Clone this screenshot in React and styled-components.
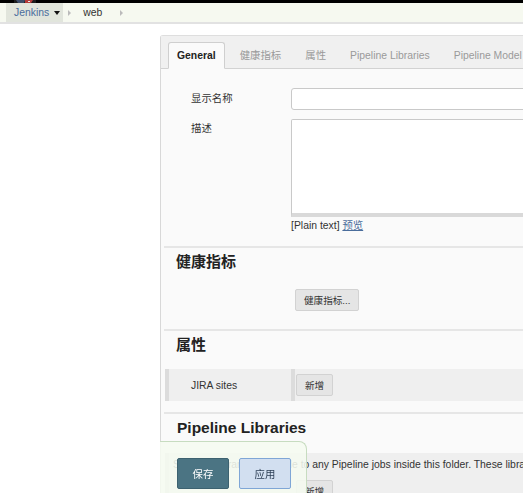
import React from "react";
import styled, { createGlobalStyle } from "styled-components";

const GlobalStyle = createGlobalStyle`
  html, body {
    margin: 0;
    padding: 0;
    background: #fff;
    overflow: hidden;
  }
  body {
    width: 523px;
    height: 493px;
    font-family: "Liberation Sans", "Noto Sans CJK SC", sans-serif;
    font-size: 10.4px;
    color: #333;
  }
  * { box-sizing: border-box; }
`;

const TopStrip = styled.div`
  height: 3px;
  background: #000;
  padding-left: 14px;
  display: flex;
  overflow: hidden;
`;

const Breadcrumbs = styled.div`
  height: 21px;
  background: #f6f9f0;
  border-bottom: 2px solid #e2e2e2;
  display: flex;
  align-items: stretch;
  padding-left: 6px;
`;

const Crumb = styled.div`
  display: flex;
  align-items: center;
  gap: 4px;
  padding: 0 ${(p) => (p.$active ? "3px" : "0")} 0 ${(p) => (p.$active ? "8px" : "0")};
  background: ${(p) => (p.$active ? "#e1e5dc" : "transparent")};
  color: ${(p) => (p.$active ? "#4a6d9c" : "#333")};
`;

const Caret = styled.span`
  width: 0;
  height: 0;
  border-left: 3.5px solid transparent;
  border-right: 3.5px solid transparent;
  border-top: 4px solid #111;
  margin-left: 1px;
`;

const Chevron = styled.span`
  display: flex;
  align-items: center;
  margin: 0 ${(p) => p.$right || 12}px 0 ${(p) => p.$left || 5}px;
  &::before {
    content: "";
    width: 0;
    height: 0;
    border-top: 3px solid transparent;
    border-bottom: 3px solid transparent;
    border-left: 3.5px solid #bbb;
  }
`;

const Main = styled.div`
  padding: 11px 0 0 160px;
`;

const Panel = styled.div`
  width: 480px;
  height: 470px;
  background: #fafafa;
  border-left: 1px solid #d8d8d8;
  border-top: 1px solid #dedede;
  border-top-left-radius: 3px;
`;

const TabBar = styled.div`
  display: flex;
  gap: 6px;
  padding: 6px 0 0 7px;
  background: #f0f0f0;
  border-bottom: 1px solid #d2d2d2;
  height: 33px;
`;

const Tab = styled.div`
  height: 27px;
  line-height: 25px;
  padding: 0 8px;
  white-space: nowrap;
  border: 1px solid ${(p) => (p.$active ? "#cfcfcf" : "transparent")};
  border-bottom-color: ${(p) => (p.$active ? "#fafafa" : "transparent")};
  border-radius: 3px 3px 0 0;
  background: ${(p) => (p.$active ? "#fafafa" : "transparent")};
  color: ${(p) => (p.$active ? "#222" : "#9a9a9a")};
  font-weight: ${(p) => (p.$active ? "bold" : "normal")};
`;

const Content = styled.div`
  padding-top: 19px;
`;

const FormRow = styled.div`
  display: grid;
  grid-template-columns: 130px 1fr;
  align-items: ${(p) => (p.$top ? "start" : "center")};
  margin-bottom: ${(p) => p.$mb || 0}px;
`;

const Label = styled.div`
  padding-left: 30px;
  padding-top: ${(p) => (p.$top ? "4px" : "0")};
  line-height: 12px;
  color: #333;
`;

const TextInput = styled.div`
  height: 22px;
  background: #fff;
  border: 1px solid #c9c9c9;
  border-radius: 3px;
`;

const TextArea = styled.div`
  height: 98px;
  background: #fff;
  border: 1px solid #c9c9c9;
  border-bottom: 4px solid #d9d9d9;
  border-radius: 2px 2px 0 0;
`;

const Hint = styled.div`
  margin-top: 3px;
  line-height: 12px;
  color: #333;
  a {
    color: #4a6d9c;
    text-decoration: underline;
  }
`;

const Section = styled.div`
  margin-left: 3px;
  margin-top: ${(p) => p.$mt || 0}px;
  border-top: 2px solid #e6e6e6;
  padding-top: 5px;
`;

const Heading = styled.div`
  font-size: ${(p) => (p.$latin ? "15.5px" : "15px")};
  font-weight: bold;
  line-height: 18px;
  color: #222;
  padding-left: ${(p) => p.$indent || 12}px;
`;

const Button = styled.div`
  display: inline-flex;
  align-items: center;
  justify-content: center;
  height: 22px;
  padding: 0 8px;
  font-size: 9.6px;
  color: #333;
  background: #e5e5e5;
  border: 1px solid #d2d2d2;
  border-radius: 2px;
  white-space: nowrap;
`;

const ButtonLine = styled.div`
  padding: ${(p) => p.$pad};
`;

const RepeatRow = styled.div`
  margin-left: 1px;
  margin-top: ${(p) => p.$mt || 0}px;
  background: #efefef;
  border-left: 4px solid #dcdcdc;
  display: grid;
  grid-template-columns: 122px 1fr;
  align-items: center;
`;

const RowLabel = styled.div`
  padding-left: 22px;
`;

const RowField = styled.div`
  border-left: 4px solid #dcdcdc;
  padding: 5px 0 5px 1px;
`;

const BlockRow = styled.div`
  margin-left: 1px;
  margin-top: ${(p) => p.$mt || 0}px;
  background: #efefef;
  border-left: 4px solid #dcdcdc;
  padding: 6px 0 0 4px;
  height: 60px;
`;

const Description = styled.div`
  white-space: nowrap;
  line-height: 12px;
`;

const BlockButtons = styled.div`
  padding: 9px 0 0 123px;
`;

const BottomBar = styled.div`
  position: fixed;
  left: 160px;
  bottom: 0;
  width: 147px;
  height: 52px;
  display: flex;
  gap: 10px;
  padding: 16px 0 0 17px;
  background: rgba(245, 250, 240, 0.88);
  border: 1px solid #c7dcc0;
  border-left: none;
  border-bottom: none;
  border-top-right-radius: 8px;
`;

const ActionButton = styled.div`
  width: 52px;
  height: 31px;
  display: flex;
  align-items: center;
  justify-content: center;
  font-size: 10.4px;
  border-radius: 2px;
  border: 1px solid ${(p) => (p.$primary ? "#3d6270" : "#7fa6d6")};
  background: ${(p) => (p.$primary ? "#4b7483" : "#d2dff0")};
  color: ${(p) => (p.$primary ? "#fff" : "#2d3f55")};
`;

function LogoFragment() {
  return (
    <svg width="22" height="3" viewBox="0 0 22 3">
      <rect x="0" y="0" width="22" height="3" fill="#1d1d1d" />
      <path d="M2 0 H11 L10 3 H4 Z" fill="#3d4d6a" />
      <path d="M11 0 H19 L17 3 H11 Z" fill="#b33a3a" />
      <rect x="14" y="1" width="2" height="1" fill="#e6e6e6" />
    </svg>
  );
}

export default function App() {
  return (
    <>
      <GlobalStyle />
      <TopStrip>
        <LogoFragment />
      </TopStrip>
      <Breadcrumbs>
        <Crumb $active>
          Jenkins
          <Caret />
        </Crumb>
        <Chevron $left={5} $right={12} />
        <Crumb>web</Crumb>
        <Chevron $left={18} $right={0} />
      </Breadcrumbs>
      <Main>
        <Panel>
          <TabBar>
            <Tab $active>General</Tab>
            <Tab>健康指标</Tab>
            <Tab>属性</Tab>
            <Tab>Pipeline Libraries</Tab>
            <Tab>Pipeline Model Definition</Tab>
          </TabBar>
          <Content>
            <FormRow $mb={9}>
              <Label>显示名称</Label>
              <TextInput />
            </FormRow>
            <FormRow $top>
              <Label $top>描述</Label>
              <div>
                <TextArea />
                <Hint>
                  [Plain text] <a>预览</a>
                </Hint>
              </div>
            </FormRow>
            <Section $mt={14}>
              <Heading>健康指标</Heading>
              <ButtonLine $pad="18px 0 18px 131px">
                <Button>健康指标...</Button>
              </ButtonLine>
            </Section>
            <Section>
              <Heading>属性</Heading>
              <RepeatRow $mt={15}>
                <RowLabel>JIRA sites</RowLabel>
                <RowField>
                  <Button>新增</Button>
                </RowField>
              </RepeatRow>
            </Section>
            <Section $mt={11}>
              <Heading $latin $indent={13}>Pipeline Libraries</Heading>
              <BlockRow $mt={16}>
                <Description>
                  Sharable libraries available to any Pipeline jobs inside this folder. These libraries will be trusted.
                </Description>
                <BlockButtons>
                  <Button>新增</Button>
                </BlockButtons>
              </BlockRow>
            </Section>
          </Content>
        </Panel>
      </Main>
      <BottomBar>
        <ActionButton $primary>保存</ActionButton>
        <ActionButton>应用</ActionButton>
      </BottomBar>
    </>
  );
}
